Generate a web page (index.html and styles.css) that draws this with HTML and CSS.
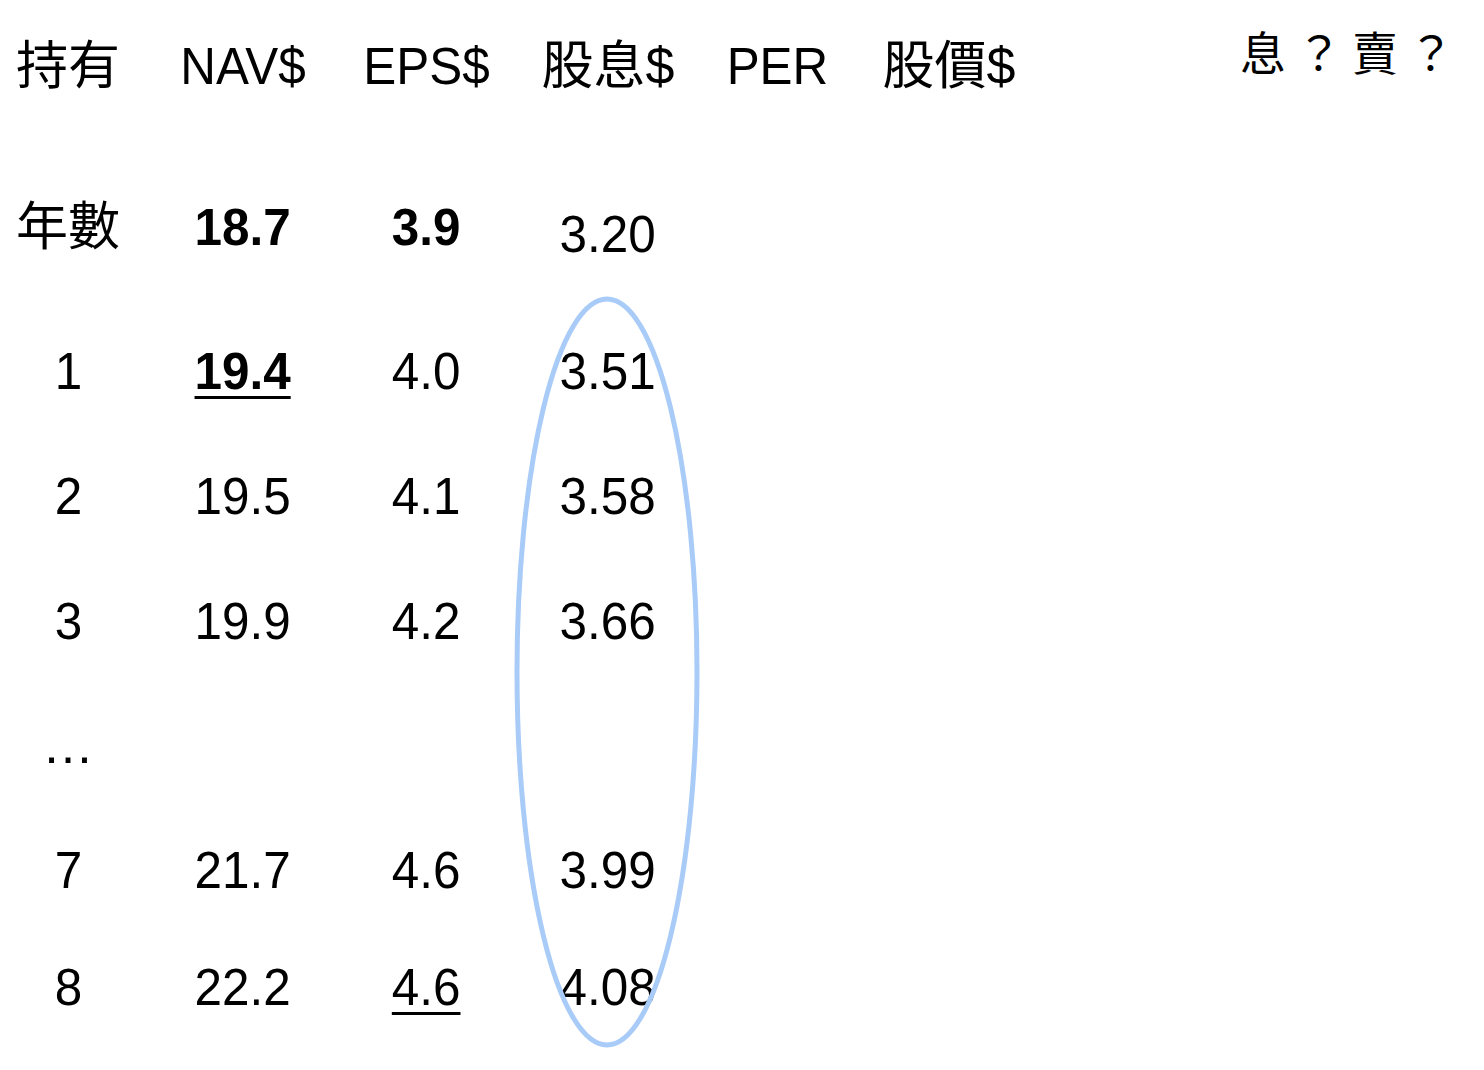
FILE: index.html
```html
<!DOCTYPE html>
<html lang="zh-Hant">
<head>
<meta charset="utf-8">
<title>股息</title>
<link rel="stylesheet" href="styles.css">
</head>
<body>
<div class="slide">
  <div class="row r-head">
    <div class="cell">持有</div>
    <div class="cell"><span class="n">NAV$</span></div>
    <div class="cell"><span class="n">EPS$</span></div>
    <div class="cell">股息$</div>
    <div class="cell"><span class="n">PER</span></div>
    <div class="cell">股價$</div>
    <div class="cell ask">息？賣？</div>
  </div>
  <div class="row r-year">
    <div class="cell">年數</div>
    <div class="cell"><span class="n b">18.7</span></div>
    <div class="cell"><span class="n b">3.9</span></div>
    <div class="cell low"><span class="n">3.20</span></div>
  </div>
  <div class="row r1">
    <div class="cell"><span class="n">1</span></div>
    <div class="cell"><span class="n b u">19.4</span></div>
    <div class="cell"><span class="n">4.0</span></div>
    <div class="cell"><span class="n">3.51</span></div>
  </div>
  <div class="row r2">
    <div class="cell"><span class="n">2</span></div>
    <div class="cell"><span class="n">19.5</span></div>
    <div class="cell"><span class="n">4.1</span></div>
    <div class="cell"><span class="n">3.58</span></div>
  </div>
  <div class="row r3">
    <div class="cell"><span class="n">3</span></div>
    <div class="cell"><span class="n">19.9</span></div>
    <div class="cell"><span class="n">4.2</span></div>
    <div class="cell"><span class="n">3.66</span></div>
  </div>
  <div class="row r-dots">
    <div class="cell">…</div>
  </div>
  <div class="row r7">
    <div class="cell"><span class="n">7</span></div>
    <div class="cell"><span class="n">21.7</span></div>
    <div class="cell"><span class="n">4.6</span></div>
    <div class="cell"><span class="n">3.99</span></div>
  </div>
  <div class="row r8">
    <div class="cell"><span class="n">8</span></div>
    <div class="cell"><span class="n">22.2</span></div>
    <div class="cell"><span class="n u">4.6</span></div>
    <div class="cell"><span class="n">4.08</span></div>
  </div>
  <svg class="oval" width="200" height="760" viewBox="0 0 200 760" aria-hidden="true">
    <ellipse cx="100" cy="380" rx="90" ry="373" fill="none" stroke="#a8cbf8" stroke-width="5"/>
  </svg>
</div>
</body>
</html>
```

FILE: styles.css
```css
html, body {
  margin: 0;
  padding: 0;
  background: #ffffff;
}

.slide {
  position: relative;
  width: 1484px;
  height: 1070px;
  overflow: hidden;
  font-family: "Liberation Sans", "Noto Sans CJK TC", sans-serif;
  font-size: 52px;
  color: #000000;
}

.row {
  display: grid;
  grid-template-columns: 136px 214px 152px 212px 126px 218px 1fr;
  height: 60px;
  line-height: 60px;
}

.cell {
  text-align: center;
  white-space: nowrap;
}

.n {
  display: inline-block;
  transform: scaleX(0.95);
}

.b {
  font-weight: bold;
}

.u {
  text-decoration: underline;
  text-decoration-thickness: 3px;
  text-underline-offset: 7px;
}

.low {
  margin-top: 7px;
}

.ask {
  text-align: right;
  font-size: 46px;
  letter-spacing: 10px;
  padding-right: 20px;
  margin-top: -12px;
}

.r-head { margin-top: 36px; }
.r-year { margin-top: 101px; }
.r1 { margin-top: 84px; }
.r2 { margin-top: 65px; }
.r3 { margin-top: 65px; }
.r-dots { margin-top: 64px; }
.r7 { margin-top: 65px; }
.r8 { margin-top: 57px; }

.oval {
  position: absolute;
  left: 507px;
  top: 292px;
}
```
